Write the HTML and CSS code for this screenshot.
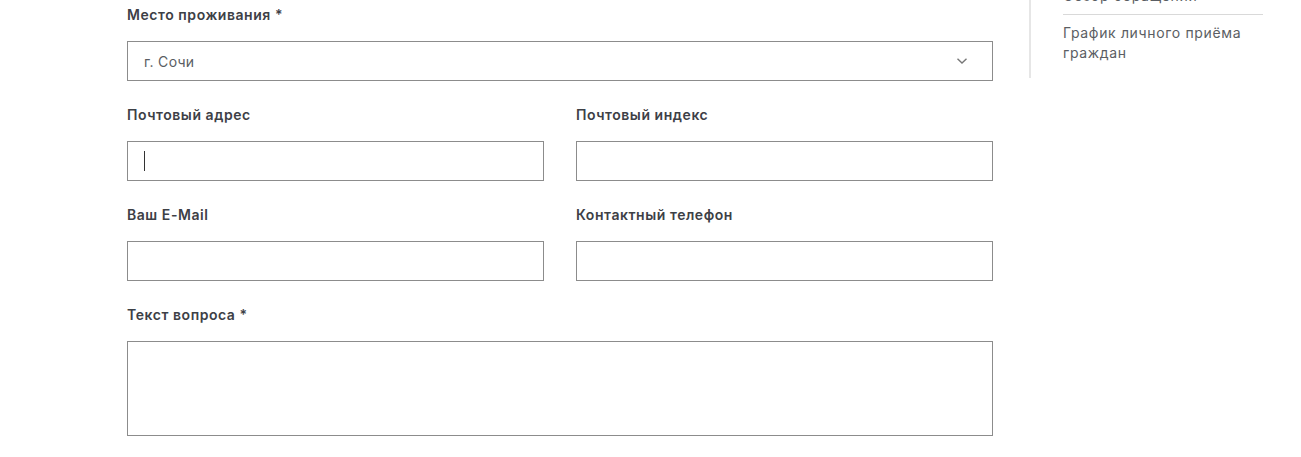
FILE: index.html
```html
<!DOCTYPE html>
<html lang="ru">
<head>
<meta charset="utf-8">
<title>Обращение</title>
<link rel="stylesheet" href="styles.css">
</head>
<body>
<div class="page">
  <form class="form">
    <div class="field">
      <label class="label">Место проживания *</label>
      <div class="select">
        <span class="select-value">г. Сочи</span>
        <svg class="chevron" width="12" height="8" viewBox="0 0 12 8"><path d="M1.5 1.8 L6 6 L10.5 1.8" fill="none" stroke="#777" stroke-width="1.4"/></svg>
      </div>
    </div>
    <div class="row">
      <div class="field">
        <label class="label">Почтовый адрес</label>
        <div class="input"><span class="caret"></span></div>
      </div>
      <div class="field">
        <label class="label">Почтовый индекс</label>
        <div class="input"></div>
      </div>
    </div>
    <div class="row">
      <div class="field">
        <label class="label">Ваш E-Mail</label>
        <div class="input"></div>
      </div>
      <div class="field">
        <label class="label">Контактный телефон</label>
        <div class="input"></div>
      </div>
    </div>
    <div class="field">
      <label class="label">Текст вопроса *</label>
      <div class="textarea"></div>
    </div>
  </form>
  <aside class="sidebar">
    <ul class="menu">
      <li class="menu-item">Обзор обращений</li>
      <li class="menu-item">График личного приёма граждан</li>
    </ul>
  </aside>
</div>
</body>
</html>
```
FILE: styles.css
```css
* { box-sizing: border-box; }
html, body { margin: 0; padding: 0; background: #fff; }
body {
  font-family: Inter, "Noto Sans", "Liberation Sans", sans-serif;
  font-size: 14px;
  line-height: 20px;
  color: #3d4046;
}
.page {
  display: flex;
  align-items: flex-start;
  padding-left: 127px;
}
.form {
  width: 866px;
  display: flex;
  flex-direction: column;
  gap: 24px;
  padding-top: 5px;
}
.row {
  display: grid;
  grid-template-columns: 1fr 1fr;
  column-gap: 32px;
}
.field {
  display: flex;
  flex-direction: column;
  gap: 16px;
}
.label {
  font-weight: 600;
  font-size: 14px;
  line-height: 20px;
  letter-spacing: 0.55px;
  color: #3d4046;
}
.select, .input, .textarea {
  border: 1px solid #8c8c8c;
  background: #fff;
  height: 40px;
}
.select {
  display: flex;
  align-items: center;
  justify-content: space-between;
  padding: 0 24px 0 16px;
}
.select-value {
  color: #5a5d62;
  font-size: 14px;
  letter-spacing: 0.3px;
  padding-top: 1px;
}
.input {
  display: flex;
  align-items: center;
  padding-left: 16px;
}
.caret {
  display: block;
  width: 1px;
  height: 20px;
  background: #333;
}
.textarea { height: 95px; }
.sidebar {
  margin-left: 36px;
  margin-top: -22px;
  border-left: 2px solid #e6e6e6;
  padding: 0 0 7px 32px;
}
.menu {
  list-style: none;
  margin: 0;
  padding: 0;
  width: 200px;
}
.menu-item {
  padding: 8px 0;
  color: #5b5e63;
  font-size: 14px;
  line-height: 20px;
  letter-spacing: 0.65px;
}
.menu-item + .menu-item {
  border-top: 1px solid #d9d9d9;
}
```
